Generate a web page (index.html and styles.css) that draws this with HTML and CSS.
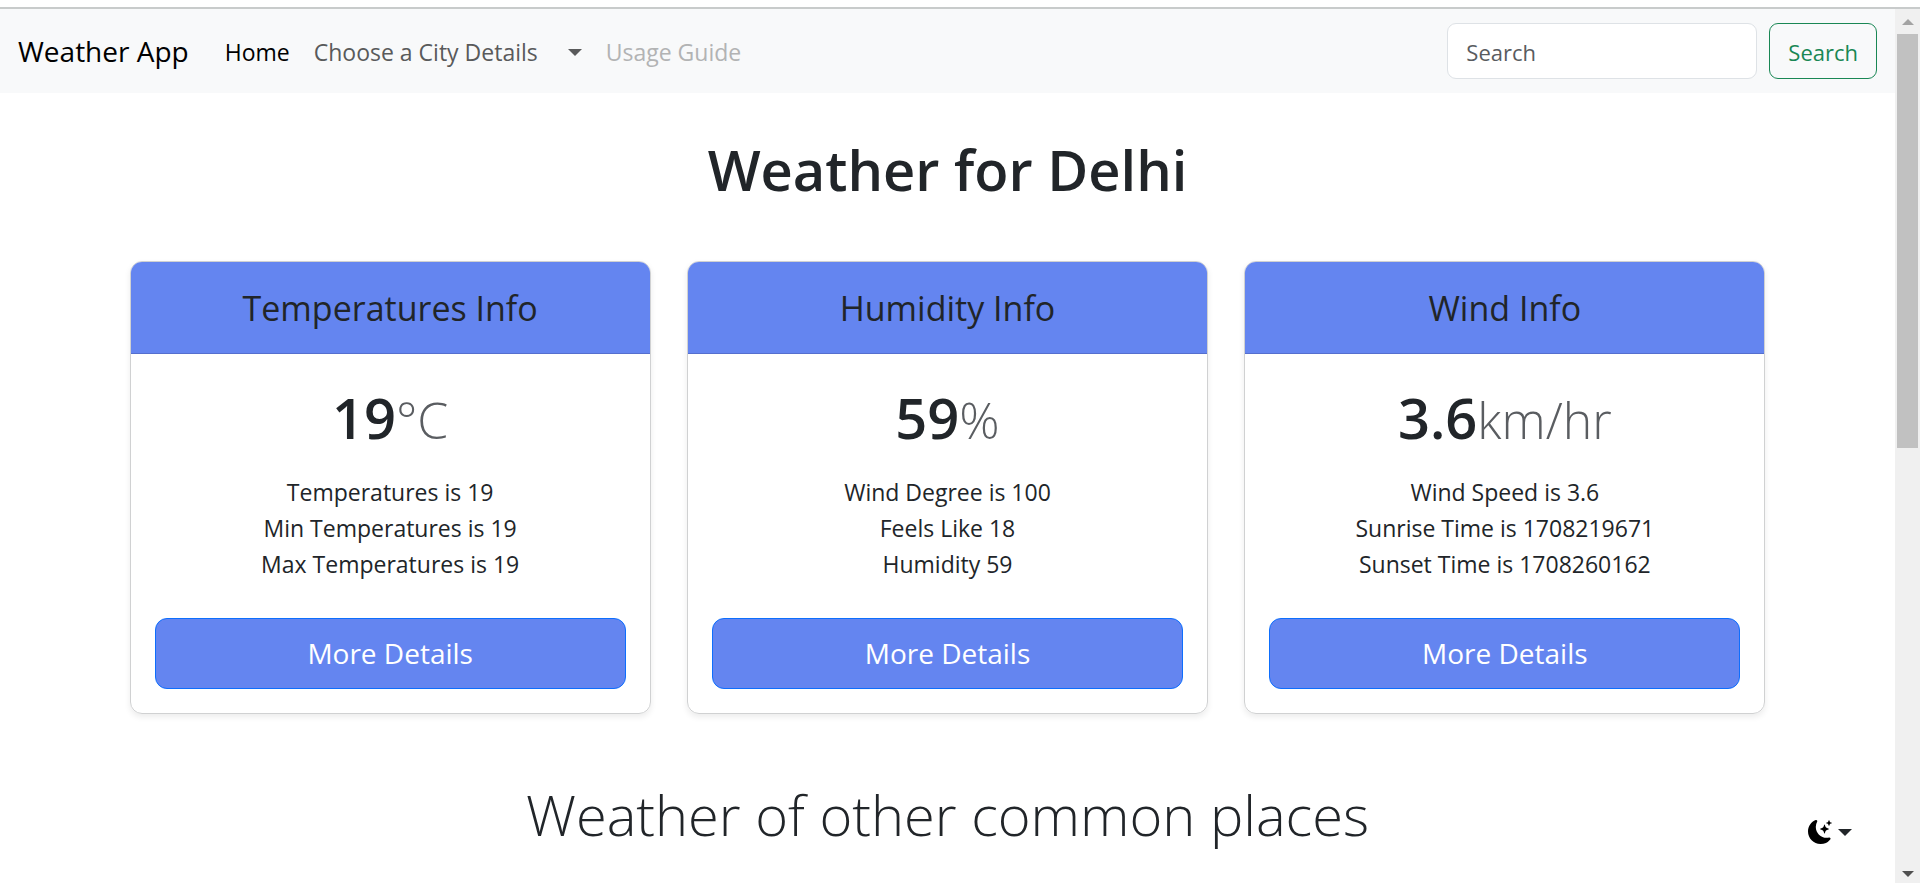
FILE: index.html
```html
<!DOCTYPE html>
<html lang="en">
<head>
<meta charset="utf-8">
<title>Weather App</title>
<link rel="stylesheet" href="styles.css">
</head>
<body>
<div class="window">
  <div class="page">
    <nav class="navbar">
      <a class="brand" href="#">Weather App</a>
      <div class="nav-links">
        <a class="nav-link active" href="#">Home</a>
        <a class="nav-link dropdown" href="#">Choose a City Details<span class="caret"></span></a>
        <a class="nav-link disabled" href="#" aria-disabled="true">Usage Guide</a>
      </div>
      <form class="search">
        <input class="search-input" type="search" placeholder="Search" aria-label="Search">
        <button class="search-button" type="button">Search</button>
      </form>
    </nav>
    <main class="container">
      <h1 class="title">Weather for Delhi</h1>
      <div class="cards">
        <section class="card">
          <h2 class="card-header">Temperatures Info</h2>
          <div class="card-body">
            <p class="reading">19<small class="unit">°C</small></p>
            <ul class="facts">
              <li>Temperatures is 19</li>
              <li>Min Temperatures is 19</li>
              <li>Max Temperatures is 19</li>
            </ul>
            <button class="details" type="button">More Details</button>
          </div>
        </section>
        <section class="card">
          <h2 class="card-header">Humidity Info</h2>
          <div class="card-body">
            <p class="reading">59<small class="unit">%</small></p>
            <ul class="facts">
              <li>Wind Degree is 100</li>
              <li>Feels Like 18</li>
              <li>Humidity 59</li>
            </ul>
            <button class="details" type="button">More Details</button>
          </div>
        </section>
        <section class="card">
          <h2 class="card-header">Wind Info</h2>
          <div class="card-body">
            <p class="reading">3.6<small class="unit">km/hr</small></p>
            <ul class="facts">
              <li>Wind Speed is 3.6</li>
              <li>Sunrise Time is 1708219671</li>
              <li>Sunset Time is 1708260162</li>
            </ul>
            <button class="details" type="button">More Details</button>
          </div>
        </section>
      </div>
      <h2 class="subtitle">Weather of other common places</h2>
    </main>
    <button class="theme-toggle" type="button" aria-label="Toggle theme">
      <svg class="moon" viewBox="0 0 16 16" fill="currentColor" aria-hidden="true">
        <path d="M6 .278a.768.768 0 0 1 .08.858 7.208 7.208 0 0 0-.878 3.46c0 4.021 3.278 7.277 7.318 7.277.527 0 1.04-.055 1.533-.16a.787.787 0 0 1 .81.316.733.733 0 0 1-.031.893A8.349 8.349 0 0 1 8.344 16C3.734 16 0 12.286 0 7.71 0 4.266 2.114 1.312 5.124.06A.752.752 0 0 1 6 .278z"/>
        <path d="M10.794 3.148a.217.217 0 0 1 .412 0l.387 1.162c.173.518.579.924 1.097 1.097l1.162.387a.217.217 0 0 1 0 .412l-1.162.387a1.734 1.734 0 0 0-1.097 1.097l-.387 1.162a.217.217 0 0 1-.412 0l-.387-1.162A1.734 1.734 0 0 0 9.31 6.593l-1.162-.387a.217.217 0 0 1 0-.412l1.162-.387a1.734 1.734 0 0 0 1.097-1.097l.387-1.162zM13.863.099a.145.145 0 0 1 .274 0l.258.774c.115.346.386.617.732.732l.774.258a.145.145 0 0 1 0 .274l-.774.258a1.156 1.156 0 0 0-.732.732l-.258.774a.145.145 0 0 1-.274 0l-.258-.774a1.156 1.156 0 0 0-.732-.732l-.774-.258a.145.145 0 0 1 0-.274l.774-.258c.346-.115.617-.386.732-.732L13.863.1z"/>
      </svg>
      <span class="caret"></span>
    </button>
  </div>
  <div class="scrollbar" aria-hidden="true">
    <svg class="arrow up" viewBox="0 0 12 6"><path d="M0 6L6 0L12 6Z"/></svg>
    <div class="track"><div class="thumb"></div></div>
    <svg class="arrow down" viewBox="0 0 12 6"><path d="M0 0H12L6 6Z"/></svg>
  </div>
</div>
</body>
</html>
```
FILE: styles.css
```css
* {
  box-sizing: border-box;
}

body {
  margin: 0;
  padding-top: 7px;
  height: 100vh;
  overflow: hidden;
  background: #fff;
  color: #212529;
  font-family: "Segoe UI", "Open Sans", "Noto Sans", sans-serif;
  font-size: 23px;
  line-height: 36px;
}

a {
  color: inherit;
  text-decoration: none;
}

button,
input {
  font: inherit;
}

.window {
  display: flex;
  height: 100%;
  border-top: 2px solid #c8cbcb;
}

.page {
  position: relative;
  flex: 1;
  min-width: 0;
  overflow: hidden;
}

.navbar {
  display: flex;
  align-items: center;
  padding: 12px 18px;
  min-height: 84px;
  background: #f8f9fa;
}

.brand {
  margin-right: 24px;
  color: #000;
  font-size: 28px;
  line-height: 45px;
}

.nav-links {
  display: flex;
  flex: 1;
}

.nav-link {
  display: flex;
  align-items: center;
  padding: 13px 12px 11px;
  color: #595a5b;
}

.nav-link.active {
  color: #000;
}

.nav-link.disabled {
  color: #b2b3b4;
}

.caret {
  border: 7px solid transparent;
  border-top-color: currentColor;
  border-bottom: 0;
}

.nav-link .caret {
  margin-left: 30px;
}

.search {
  display: flex;
  gap: 12px;
}

.search-input,
.search-button {
  padding: 10px 18px 8px;
  border-radius: 9px;
  font-size: 22px;
  line-height: 36px;
}

.search-input {
  width: 310px;
  border: 1px solid #dee2e6;
  background: #fff;
  color: #212529;
}

.search-input::placeholder {
  color: #595c5f;
  opacity: 1;
}

.search-button {
  border: 1px solid #198754;
  background: transparent;
  color: #198754;
}

.container {
  max-width: 1684px;
  margin: 0 auto;
  padding: 40px 24px;
  text-align: center;
}

.title,
.subtitle {
  margin: 0;
  font-size: 56px;
  line-height: 72px;
}

.title {
  font-weight: 600;
}

.subtitle {
  margin-top: 64px;
  font-weight: 300;
}

.cards {
  display: grid;
  grid-template-columns: repeat(3, 1fr);
  gap: 36px;
  margin-top: 56px;
}

.card {
  border: 1px solid #d0d1d2;
  border-radius: 12px;
  overflow: hidden;
  box-shadow: 0 3px 6px rgba(0, 0, 0, 0.08);
}

.card-header {
  margin: 0;
  padding: 25px 24px 23px;
  border-bottom: 1px solid #556fce;
  background: #6485f0;
  font-size: 34px;
  font-weight: 400;
  line-height: 43px;
}

.card-body {
  padding: 24px;
}

.reading {
  margin: 0;
  font-size: 56px;
  font-weight: 600;
  line-height: 78px;
}

.unit {
  color: #5a5d61;
  font-size: 50px;
  font-weight: 300;
  line-height: 50px;
}

.facts {
  margin: 18px 0 36px;
  padding: 0;
  list-style: none;
}

.details {
  width: 100%;
  padding: 12px 24px;
  border: 1px solid #0d6efd;
  border-radius: 12px;
  background: #6485f0;
  color: #fff;
  font-size: 28px;
  line-height: 45px;
}

.theme-toggle {
  position: absolute;
  right: 25px;
  bottom: 25px;
  display: flex;
  align-items: center;
  gap: 6px;
  padding: 14px 18px;
  border: 0;
  background: transparent;
  color: #212529;
}

.moon {
  width: 24px;
  height: 24px;
  color: #000;
}

.scrollbar {
  display: flex;
  flex-direction: column;
  align-items: center;
  width: 25px;
  padding: 10px 0 6px;
  background: #f0f0f0;
}

.arrow {
  width: 12px;
  height: 6px;
}

.up {
  fill: #a3a3a3;
}

.down {
  fill: #505050;
}

.track {
  flex: 1;
  width: 21px;
  padding: 9px 0;
}

.thumb {
  height: 50%;
  background: #c1c1c1;
}
```
